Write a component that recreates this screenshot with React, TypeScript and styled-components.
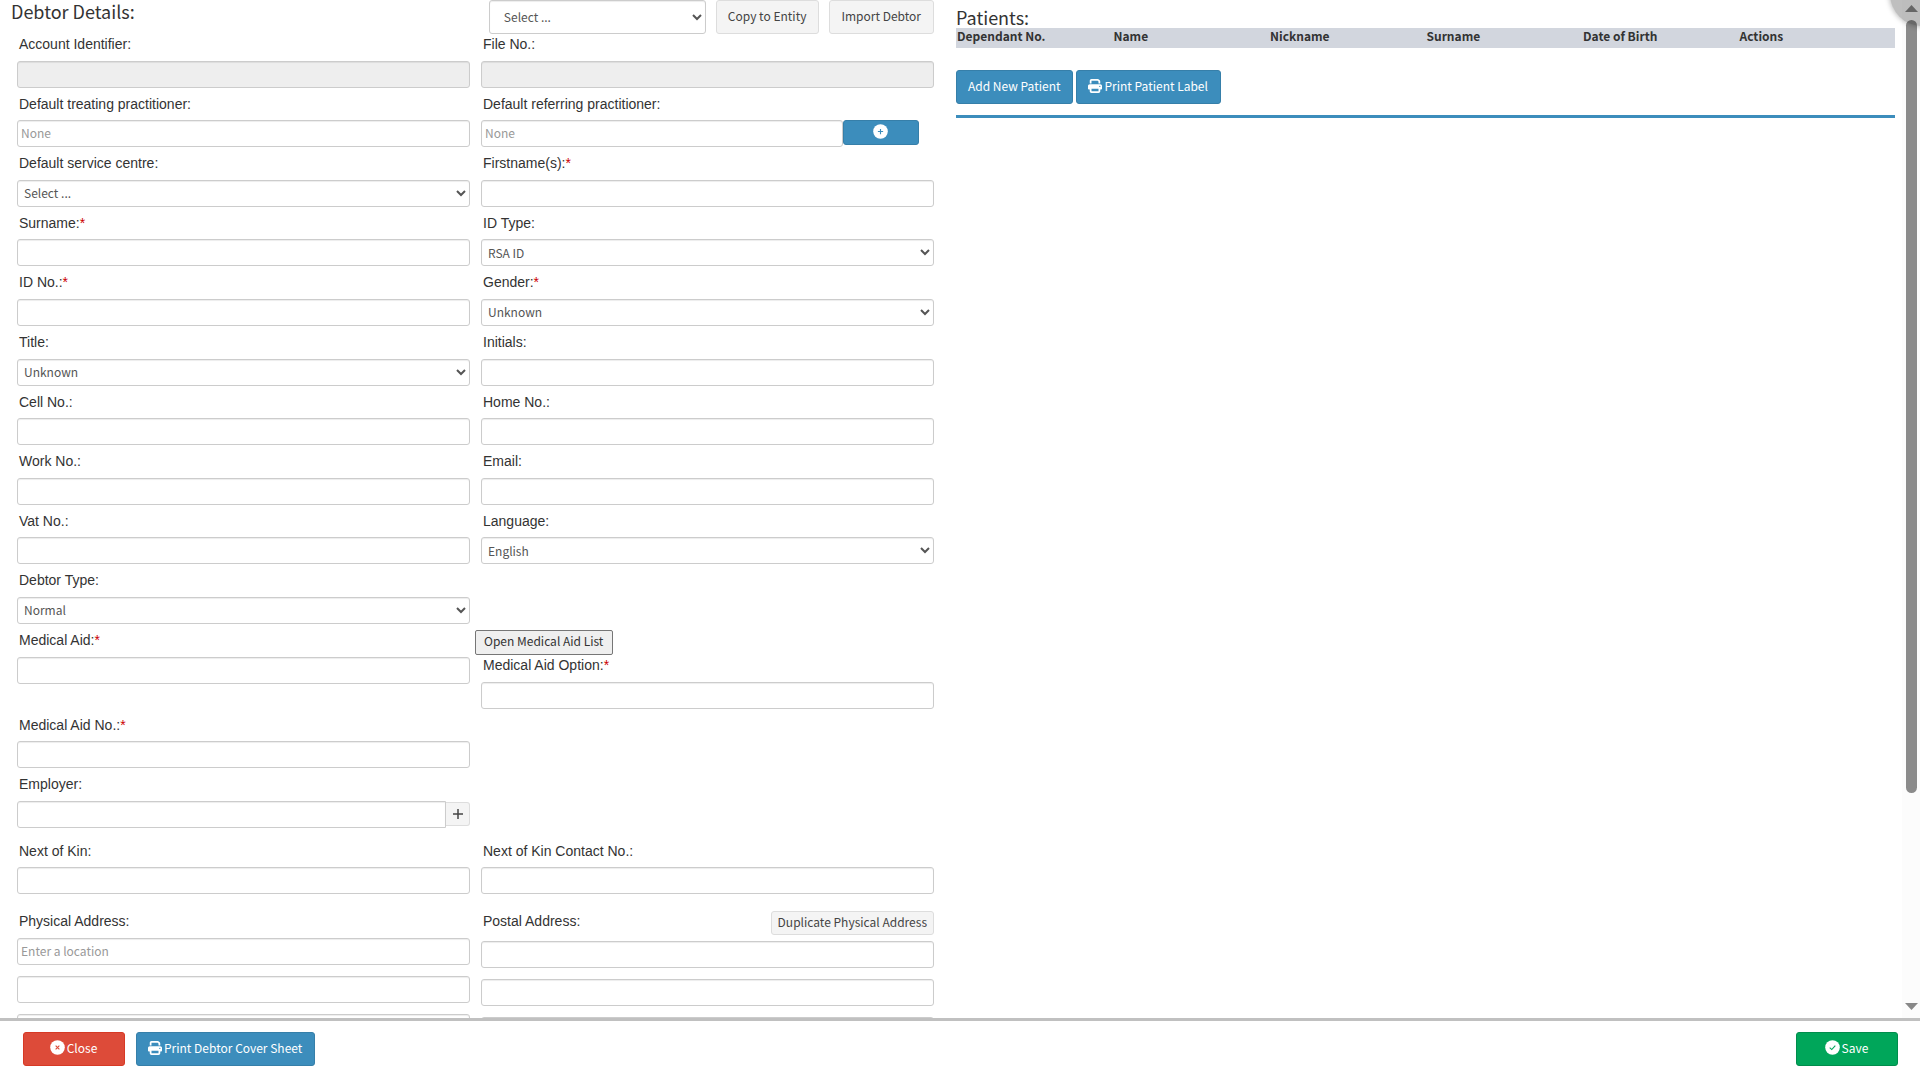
import React from "react";
import styled, { createGlobalStyle, css } from "styled-components";
import { FaPrint } from "react-icons/fa6";

const uiFont = `"Source Sans Pro", "Noto Sans CJK SC", sans-serif`;
const labelFont = `Arial, "Liberation Sans", sans-serif`;

const GlobalStyle = createGlobalStyle`
  *, *::before, *::after { box-sizing: border-box; }
  body { margin: 0; background: #fff; color: #333; font: 12px/20px ${uiFont}; }
  button, input, select { font-family: inherit; }
`;

const Page = styled.div`
  display: flex;
  flex-direction: column;
  height: 100vh;
  overflow: hidden;
  position: relative;
`;

const Body = styled.div`
  display: flex;
  flex: 1;
  min-height: 0;
`;

const Scroller = styled.main`
  flex: 1;
  min-width: 0;
  display: grid;
  grid-template-columns: calc(50% - 17px) 1fr;
  column-gap: 22px;
  align-items: start;
  overflow-y: auto;
  scrollbar-width: none;
`;

const DebtorPane = styled.section`
  min-width: 0;
`;

const PaneHeader = styled.header`
  display: flex;
  justify-content: space-between;
  align-items: flex-start;
  height: 34px;
  padding-left: 11px;
`;

const Title = styled.h1`
  margin: 0;
  font-size: 18px;
  line-height: 22px;
  font-weight: 400;
`;

const HeaderActions = styled.div`
  display: flex;
  gap: 10px;
`;

const FormRow = styled.div<{ $gapAbove?: number }>`
  display: grid;
  grid-template-columns: 1fr 1fr;
  column-gap: 11px;
  padding: 0 0 6px 17px;
  margin-top: ${(p) => p.$gapAbove ?? 0}px;
`;

const Field = styled.div`
  min-width: 0;
`;

const LabelLine = styled.div`
  display: flex;
  justify-content: space-between;
`;

const Label = styled.label`
  display: block;
  padding: 1px 0 0 2px;
  margin-bottom: 6px;
  font-family: ${labelFont};
  font-size: 14px;
  line-height: 1.4;
`;

const Required = styled.span`
  color: #c00;
`;

const control = css`
  display: block;
  width: 100%;
  height: 27px;
  border: 1px solid #ccc;
  border-radius: 3px;
  background-color: #fff;
  box-shadow: inset 0 1px 1px rgba(0, 0, 0, 0.075);
  color: #555;
  font-size: 12px;
`;

const Input = styled.input`
  ${control}
  padding: 0 3px 2px;
  &::placeholder { color: #999; opacity: 1; }
  &:disabled { background-color: #eee; }
`;

const Select = styled.select`
  ${control}
  padding: 0 4px 1px 2px;
`;

const EntitySelect = styled(Select)`
  width: 217px;
  height: 34px;
  padding: 0 12px 2px 10px;
`;

const InputGroup = styled.div`
  display: flex;
  align-items: flex-start;
`;

const AddressLines = styled.div`
  display: grid;
  row-gap: 11px;
`;

const tones = {
  plain: ["#f4f4f4", "#ddd", "#444"],
  blue: ["#3c8dbc", "#367fa9", "#fff"],
  red: ["#dd4b39", "#d73925", "#fff"],
  green: ["#00a65a", "#008d4c", "#fff"],
};

const Button = styled.button<{ $tone?: keyof typeof tones; $wide?: boolean }>`
  display: inline-flex;
  align-items: center;
  justify-content: center;
  gap: 2px;
  height: 34px;
  min-width: ${(p) => (p.$wide ? "102px" : "0")};
  padding: 0 12px 3px 11px;
  border: 1px solid ${(p) => tones[p.$tone ?? "plain"][1]};
  border-radius: 3px;
  background: ${(p) => tones[p.$tone ?? "plain"][0]};
  color: ${(p) => tones[p.$tone ?? "plain"][2]};
  font-size: 12px;
  white-space: nowrap;
`;

const SmallButton = styled(Button)`
  height: 24px;
  padding: 0 6px 3px;
  margin-bottom: 6px;
`;

const AddReferrer = styled(Button)`
  flex: none;
  width: 76px;
  height: 25px;
  margin-right: 15px;
`;

const AddEmployer = styled(Button)`
  flex: none;
  align-self: center;
  width: 24px;
  height: 24px;
  padding: 0;
  border-left: 0;
  border-radius: 0 3px 3px 0;
`;

const EmployerInput = styled(Input)`
  border-radius: 3px 0 0 3px;
`;

const MedicalListButton = styled.button`
  display: block;
  height: 25px;
  margin-left: -6px;
  padding: 0 9px 3px 8px;
  border: 1px solid #767676;
  border-radius: 2px;
  background: #efefef;
  color: #333;
  font-size: 12px;
`;

const PatientsPane = styled.section`
  min-width: 0;
  padding: 6px 7px 0 0;
`;

const PatientTable = styled.table`
  width: 100%;
  table-layout: fixed;
  border-collapse: collapse;
  background: #d2d6de;
`;

const HeadCell = styled.th`
  height: 20px;
  padding: 0 0 4px 1px;
  text-align: left;
  font-size: 12px;
  line-height: 16px;
`;

const PatientActions = styled.div`
  display: flex;
  gap: 3px;
  margin-top: 22px;
`;

const Rule = styled.hr`
  height: 3px;
  margin: 11px 0 0;
  border: 0;
  background: #3c8dbc;
`;

const ScrollTrack = styled.div`
  display: flex;
  flex-direction: column;
  align-items: center;
  flex: none;
  width: 18px;
  padding: 5px 0 8px;
  background: #fcfcfc;
`;

const ScrollArrow = styled.svg`
  display: block;
  flex: none;
  width: 13px;
  height: 7px;
  fill: #888;
`;

const ScrollRail = styled.div`
  flex: 1;
  width: 11px;
  margin: 8px 0;
`;

const ScrollThumb = styled.div`
  height: calc(79% + 3px);
  border-radius: 6px;
  background: #8b8b8b;
`;

const CornerShade = styled.div`
  position: absolute;
  top: -38px;
  right: -34px;
  width: 64px;
  height: 64px;
  border-radius: 50%;
  background: rgba(0, 0, 0, 0.25);
  box-shadow: 0 0 5px 1px rgba(0, 0, 0, 0.25);
  pointer-events: none;
`;

const Footer = styled.footer`
  display: flex;
  gap: 11px;
  padding: 11px 22px 11px 23px;
  border-top: 3px solid #c0c0c0;
`;

const SaveSlot = styled.div`
  margin-left: auto;
`;

const marks = {
  plus: "M8 5.2v5.6M5.2 8h5.6",
  close: "M6 6l4 4M10 6l-4 4",
  check: "M5 8.2l2.2 2L11 6",
};

function RoundIcon({ mark, color }: { mark: keyof typeof marks; color: string }) {
  return (
    <svg width="15" height="15" viewBox="0 0 16 16" aria-hidden="true">
      <circle cx="8" cy="8" r="7.8" fill="#fff" />
      <path d={marks[mark]} stroke={color} strokeWidth="1.2" fill="none" />
    </svg>
  );
}

type FieldProps = {
  id: string;
  label: string;
  required?: boolean;
  options?: string;
  placeholder?: string;
  disabled?: boolean;
};

function FieldLabel({ id, label, required }: FieldProps) {
  return (
    <Label htmlFor={id}>
      {label}
      {required && <Required>*</Required>}
    </Label>
  );
}

function FormField(props: FieldProps) {
  return (
    <Field>
      <FieldLabel {...props} />
      {props.options ? (
        <Select id={props.id}>
          <option>{props.options}</option>
        </Select>
      ) : (
        <Input id={props.id} placeholder={props.placeholder} disabled={props.disabled} />
      )}
    </Field>
  );
}

const contactRows: [FieldProps, FieldProps?][] = [
  [{ id: "service", label: "Default service centre:", options: "Select ..." }, { id: "firstname", label: "Firstname(s):", required: true }],
  [{ id: "surname", label: "Surname:", required: true }, { id: "idtype", label: "ID Type:", options: "RSA ID" }],
  [{ id: "idno", label: "ID No.:", required: true }, { id: "gender", label: "Gender:", required: true, options: "Unknown" }],
  [{ id: "title", label: "Title:", options: "Unknown" }, { id: "initials", label: "Initials:" }],
  [{ id: "cell", label: "Cell No.:" }, { id: "home", label: "Home No.:" }],
  [{ id: "work", label: "Work No.:" }, { id: "email", label: "Email:" }],
  [{ id: "vat", label: "Vat No.:" }, { id: "language", label: "Language:", options: "English" }],
  [{ id: "debtortype", label: "Debtor Type:", options: "Normal" }],
];

const columns = ["Dependant No.", "Name", "Nickname", "Surname", "Date of Birth", "Actions"];

export default function App() {
  return (
    <Page>
      <GlobalStyle />
      <Body>
        <Scroller>
          <DebtorPane>
            <PaneHeader>
              <Title>Debtor Details:</Title>
              <HeaderActions>
                <EntitySelect aria-label="Entity">
                  <option>Select ...</option>
                </EntitySelect>
                <Button>Copy to Entity</Button>
                <Button>Import Debtor</Button>
              </HeaderActions>
            </PaneHeader>
            <FormRow>
              <FormField id="account" label="Account Identifier:" disabled />
              <FormField id="file" label="File No.:" disabled />
            </FormRow>
            <FormRow>
              <FormField id="treating" label="Default treating practitioner:" placeholder="None" />
              <Field>
                <FieldLabel id="referring" label="Default referring practitioner:" />
                <InputGroup>
                  <Input id="referring" placeholder="None" />
                  <AddReferrer $tone="blue" aria-label="Add referring practitioner">
                    <RoundIcon mark="plus" color="#3c8dbc" />
                  </AddReferrer>
                </InputGroup>
              </Field>
            </FormRow>
            {contactRows.map(([left, right]) => (
              <FormRow key={left.id}>
                <FormField {...left} />
                {right && <FormField {...right} />}
              </FormRow>
            ))}
            <FormRow>
              <FormField id="medaid" label="Medical Aid:" required />
              <Field>
                <MedicalListButton>Open Medical Aid List</MedicalListButton>
                <FormField id="medoption" label="Medical Aid Option:" required />
              </Field>
            </FormRow>
            <FormRow>
              <FormField id="medno" label="Medical Aid No.:" required />
            </FormRow>
            <FormRow>
              <Field>
                <FieldLabel id="employer" label="Employer:" />
                <InputGroup>
                  <EmployerInput id="employer" />
                  <AddEmployer aria-label="Add employer">
                    <svg width="12" height="12" viewBox="0 0 12 12" aria-hidden="true">
                      <path d="M6 1v10M1 6h10" stroke="#444" strokeWidth="1.5" />
                    </svg>
                  </AddEmployer>
                </InputGroup>
              </Field>
            </FormRow>
            <FormRow $gapAbove={7}>
              <FormField id="kin" label="Next of Kin:" />
              <FormField id="kincontact" label="Next of Kin Contact No.:" />
            </FormRow>
            <FormRow $gapAbove={11}>
              <Field>
                <FieldLabel id="physical" label="Physical Address:" />
                <AddressLines>
                  <Input id="physical" placeholder="Enter a location" />
                  <Input aria-label="Physical address line 2" />
                  <Input aria-label="Physical address line 3" />
                </AddressLines>
              </Field>
              <Field>
                <LabelLine>
                  <FieldLabel id="postal" label="Postal Address:" />
                  <SmallButton>Duplicate Physical Address</SmallButton>
                </LabelLine>
                <AddressLines>
                  <Input id="postal" />
                  <Input aria-label="Postal address line 2" />
                  <Input aria-label="Postal address line 3" />
                </AddressLines>
              </Field>
            </FormRow>
          </DebtorPane>
          <PatientsPane>
            <Title as="h2">Patients:</Title>
            <PatientTable>
              <thead>
                <tr>
                  {columns.map((c) => (
                    <HeadCell key={c}>{c}</HeadCell>
                  ))}
                </tr>
              </thead>
            </PatientTable>
            <PatientActions>
              <Button $tone="blue">Add New Patient</Button>
              <Button $tone="blue">
                <FaPrint size={14} />
                Print Patient Label
              </Button>
            </PatientActions>
            <Rule />
          </PatientsPane>
        </Scroller>
        <ScrollTrack aria-hidden="true">
          <ScrollArrow viewBox="0 0 13 7">
            <path d="M0 7L6.500 0L13 7z" />
          </ScrollArrow>
          <ScrollRail>
            <ScrollThumb />
          </ScrollRail>
          <ScrollArrow viewBox="0 0 13 7">
            <path d="M0 0h13L6.500 7z" />
          </ScrollArrow>
        </ScrollTrack>
      </Body>
      <Footer>
        <Button $tone="red" $wide>
          <RoundIcon mark="close" color="#dd4b39" />
          Close
        </Button>
        <Button $tone="blue">
          <FaPrint size={14} />
          Print Debtor Cover Sheet
        </Button>
        <SaveSlot>
          <Button $tone="green" $wide>
            <RoundIcon mark="check" color="#00a65a" />
            Save
          </Button>
        </SaveSlot>
      </Footer>
      <CornerShade />
    </Page>
  );
}
